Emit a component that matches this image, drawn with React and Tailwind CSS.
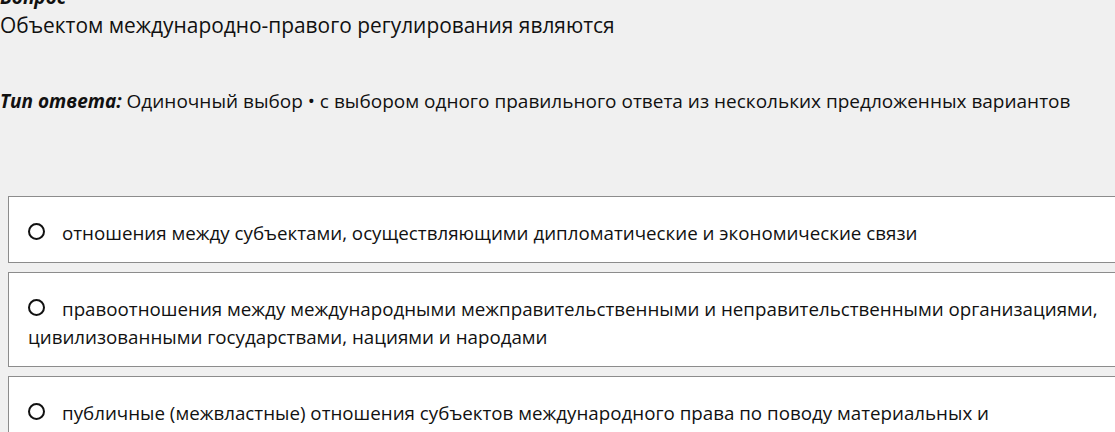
export default function App() {
  const options = [
    "отношения между субъектами, осуществляющими дипломатические и экономические связи",
    "правоотношения между международными межправительственными и неправительственными организациями, цивилизованными государствами, нациями и народами",
    "публичные (межвластные) отношения субъектов международного права по поводу материальных и нематериальных благ",
  ];
  return (
    <div className="w-[1115px] h-[432px] overflow-hidden bg-[#f0f0f0] text-[#111] font-['Open_Sans',sans-serif]">
      <div className="-mt-[17px] h-[28px] leading-[28px] text-[19px] font-bold italic">Вопрос</div>
      <div className="leading-[28px] text-[20.9px]">Объектом международно-правого регулирования являются</div>
      <div className="leading-[28px] mt-[48px] text-[19px]">
        <span className="font-bold italic">Тип ответа:</span> Одиночный выбор • с выбором одного правильного ответа из нескольких предложенных вариантов
      </div>
      <div className="mt-[81px] ml-2 w-[1125px] flex flex-col gap-[9px] text-[18.75px]">
        {options.map((t, i) => (
          <div key={i} className="bg-white border border-[#8c8c8c] pl-[19px] pr-[19px] pt-[22px] pb-[15px] leading-[28px]">
            <span className="inline-block w-[17px] h-[17px] rounded-full border-2 border-[#111] align-[0px] mr-[17px]"></span>
            {t}
          </div>
        ))}
      </div>
    </div>
  );
}
